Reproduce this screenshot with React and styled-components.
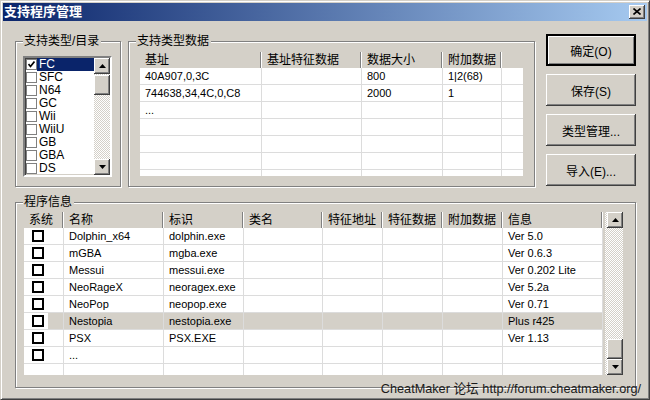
import React from 'react';
import styled, { createGlobalStyle } from 'styled-components';

const FACE = '#D4D0C8';
const GRID = '#DCDCDC';
const FONT = '"Liberation Sans", "Noto Sans CJK SC", sans-serif';

const GlobalStyle = createGlobalStyle`
  html, body { margin: 0; padding: 0; background: ${FACE}; }
  body { font-family: ${FONT}; font-size: 11px; color: #000; }
  * { box-sizing: border-box; }
`;

const Window = styled.div`
  position: relative;
  width: 650px;
  height: 400px;
  background: ${FACE};
  border: 1px solid;
  border-color: ${FACE} #404040 #404040 ${FACE};
  box-shadow: inset 1px 1px 0 #fff, inset -1px -1px 0 #808080;
  padding: 2px;
  display: flex;
  flex-direction: column;
`;

const TitleBar = styled.div`
  flex: none;
  height: 18px;
  display: flex;
  align-items: center;
  justify-content: space-between;
  padding: 0 2px 0 1px;
  background: linear-gradient(to right, #0a246a, #a6caf0);
`;

const TitleText = styled.span`
  color: #fff;
  font-weight: bold;
  font-size: 13px;
  line-height: 18px;
`;

const CloseButton = styled.div`
  width: 16px;
  height: 14px;
  background: ${FACE};
  box-shadow: inset -1px -1px #404040, inset 1px 1px #fff, inset -2px -2px #808080;
  display: flex;
  align-items: center;
  justify-content: center;
  padding-bottom: 1px;
`;

const Body = styled.div`
  flex: 1;
  padding: 13px 0 0 12px;
  display: flex;
  flex-direction: column;
`;

const TopRow = styled.div`
  display: flex;
  align-items: flex-start;
`;

const GroupBox = styled.div`
  position: relative;
  flex: none;
  width: ${p => p.$w}px;
  height: ${p => p.$h}px;
  margin: ${p => p.$m || '0'};
  padding: ${p => p.$pad};
  border: 1px solid #808080;
  box-shadow: inset 1px 1px 0 #fff, 1px 1px 0 #fff;
`;

const GroupLabel = styled.span`
  position: absolute;
  top: -8px;
  left: 7px;
  padding: 0 2px 0 1px;
  background: ${FACE};
  font-size: 12px;
  line-height: 15px;
`;

const ButtonColumn = styled.div`
  display: flex;
  flex-direction: column;
  gap: 8px;
  margin-left: 11px;
`;

const Button = styled.button`
  width: 90px;
  height: 32px;
  padding: 0;
  background: ${FACE};
  font-family: ${FONT};
  font-size: 12px;
  color: #000;
  border: ${p => (p.$default ? '2px solid #000' : 'none')};
  box-shadow: ${p =>
    p.$default
      ? 'inset 1px 1px #fff, inset -1px -1px #808080'
      : `inset -1px -1px #404040, inset 1px 1px #fff, inset -2px -2px #808080, inset 2px 2px ${FACE}`};
`;

/* ---------- listbox ---------- */

const ListBox = styled.div`
  width: 89px;
  height: 121px;
  display: flex;
  background: #fff;
  border: 2px solid;
  border-color: #808080 #fff #fff #808080;
  box-shadow: inset 1px 1px #404040, inset -1px -1px ${FACE};
  overflow: hidden;
`;

const ListItems = styled.div`
  flex: 1;
  overflow: hidden;
`;

const ListItem = styled.div`
  height: 13px;
  display: flex;
  align-items: center;
`;

const SmallCheck = styled.span`
  flex: none;
  width: 11px;
  height: 11px;
  margin-left: 1px;
  border: 1px solid #808080;
  background: #fff;
  display: flex;
  align-items: center;
  justify-content: center;
`;

const ItemText = styled.span`
  flex: 1;
  height: 13px;
  line-height: 13px;
  font-size: 12px;
  padding-left: 2px;
  background: ${p => (p.$sel ? '#0a246a' : 'transparent')};
  color: ${p => (p.$sel ? '#fff' : '#000')};
`;

/* ---------- scrollbar ---------- */

const Track = styled.div`
  flex: none;
  width: ${p => p.$w || 16}px;
  display: flex;
  flex-direction: column;
  align-items: flex-end;
  background: repeating-conic-gradient(#fff 0% 25%, ${FACE} 0% 50%) 0 0 / 2px 2px;
`;

const ScrollPart = styled.div`
  flex: none;
  width: 16px;
  height: ${p => p.$h || 16}px;
  margin-top: ${p => p.$mt || 0}px;
  background: ${FACE};
  box-shadow: inset -1px -1px #404040, inset 1px 1px #fff, inset -2px -2px #808080;
  display: flex;
  align-items: center;
  justify-content: center;
`;

const Spacer = styled.div`
  flex: 1;
`;

const Arrow = ({ down }) => (
  <svg width="7" height="4" viewBox="0 0 7 4">
    <polygon points={down ? '0,0 7,0 3.5,4' : '3.5,0 7,4 0,4'} fill="#000" />
  </svg>
);

/* ---------- grids ---------- */

const Table = styled.div`
  width: ${p => p.$w}px;
  height: ${p => p.$h}px;
  overflow: hidden;
  background: #fff;
`;

const Row = styled.div`
  display: grid;
  grid-template-columns: ${p => p.$cols};
  height: ${p => (p.$head ? 16 : 17)}px;
  background: ${p => (p.$head ? FACE : '#fff')};
`;

const HeadCell = styled.div`
  font-size: 12px;
  line-height: 16px;
  padding-left: 5px;
  white-space: nowrap;
  overflow: hidden;
  border-right: ${p => (p.$sep ? '1px solid #fff' : 'none')};
  box-shadow: ${p => (p.$sep ? 'inset -1px 0 #808080' : 'none')};
`;

const Cell = styled.div`
  line-height: 16px;
  padding-left: 5px;
  white-space: nowrap;
  overflow: hidden;
  border-bottom: 1px solid ${GRID};
  border-right: ${p => (p.$sep ? `1px solid ${GRID}` : 'none')};
  background: ${p => (p.$sel ? FACE : 'transparent')};
`;

const CheckCell = styled(Cell)`
  display: flex;
  align-items: center;
  padding-left: 8px;
  background: ${p => (p.$sel ? `linear-gradient(to right, #fff 24px, ${FACE} 24px)` : 'transparent')};
`;

const BoxCheck = styled.span`
  width: 12px;
  height: 12px;
  border: 2px solid #000;
  background: #fff;
`;

const ListArea = styled.div`
  width: 599px;
  height: 163px;
  display: flex;
  background: ${FACE};
`;

const Footer = styled.div`
  position: absolute;
  right: 8px;
  bottom: 2px;
  font-size: 12.7px;
  line-height: 15px;
  color: #1a1a1a;
  white-space: nowrap;
`;

const types = ['FC', 'SFC', 'N64', 'GC', 'Wii', 'WiiU', 'GB', 'GBA', 'DS'];

const dataCols = '122px 100px 81px 59px 21px';
const dataHead = ['基址', '基址特征数据', '数据大小', '附加数据', ''];
const dataRows = [
  ['40A907,0,3C', '', '800', '1|2(68)', ''],
  ['744638,34,4C,0,C8', '', '2000', '1', ''],
  ['...', '', '', '', ''],
  ['', '', '', '', ''],
  ['', '', '', '', ''],
  ['', '', '', '', ''],
  ['', '', '', '', ''],
];

const progCols = '40px 100px 80px 79px 60px 60px 60px 100px';
const progHead = ['系统', '名称', '标识', '类名', '特征地址', '特征数据', '附加数据', '信息'];
const programs = [
  { name: 'Dolphin_x64', id: 'dolphin.exe', info: 'Ver 5.0' },
  { name: 'mGBA', id: 'mgba.exe', info: 'Ver 0.6.3' },
  { name: 'Messui', id: 'messui.exe', info: 'Ver 0.202 Lite' },
  { name: 'NeoRageX', id: 'neoragex.exe', info: 'Ver 5.2a' },
  { name: 'NeoPop', id: 'neopop.exe', info: 'Ver 0.71' },
  { name: 'Nestopia', id: 'nestopia.exe', info: 'Plus r425', sel: true },
  { name: 'PSX', id: 'PSX.EXE', info: 'Ver 1.13' },
  { name: '...', id: '', info: '' },
  { name: '', id: '', info: '', empty: true },
];

export default function App() {
  return (
    <>
      <GlobalStyle />
      <Window>
        <TitleBar>
          <TitleText>支持程序管理</TitleText>
          <CloseButton>
            <svg width="8" height="7" viewBox="0 0 8 7">
              <path d="M0.5 0.5 L7.5 6.5 M7.5 0.5 L0.5 6.5" stroke="#000" strokeWidth="1.6" />
            </svg>
          </CloseButton>
        </TitleBar>

        <Body>
          <TopRow>
            <GroupBox $w={106} $h={146} $m="7px 0 0 0" $pad="14px 0 0 7px">
              <GroupLabel>支持类型/目录</GroupLabel>
              <ListBox>
                <ListItems>
                  {types.map((t, i) => (
                    <ListItem key={t}>
                      <SmallCheck>
                        {i === 0 && (
                          <svg width="7" height="7" viewBox="0 0 7 7">
                            <path d="M0.5 3 L2.5 5.5 L6.5 0.5" stroke="#000" strokeWidth="1.7" fill="none" />
                          </svg>
                        )}
                      </SmallCheck>
                      <ItemText $sel={i === 0}>{t}</ItemText>
                    </ListItem>
                  ))}
                </ListItems>
                <Track>
                  <ScrollPart><Arrow /></ScrollPart>
                  <ScrollPart $h={20} $mt={1} />
                  <Spacer />
                  <ScrollPart><Arrow down /></ScrollPart>
                </Track>
              </ListBox>
            </GroupBox>

            <GroupBox $w={407} $h={146} $m="7px 0 0 7px" $pad="10px 0 0 11px">
              <GroupLabel>支持类型数据</GroupLabel>
              <Table $w={383} $h={124}>
                <Row $head $cols={dataCols}>
                  {dataHead.map((h, i) => (
                    <HeadCell key={i} $sep={i < 4}>{h}</HeadCell>
                  ))}
                </Row>
                {dataRows.map((r, ri) => (
                  <Row key={ri} $cols={dataCols}>
                    {r.map((c, ci) => (
                      <Cell key={ci} $sep={ci < 4}>{c}</Cell>
                    ))}
                  </Row>
                ))}
              </Table>
            </GroupBox>

            <ButtonColumn>
              <Button $default>确定(O)</Button>
              <Button>保存(S)</Button>
              <Button>类型管理...</Button>
              <Button>导入(E)...</Button>
            </ButtonColumn>
          </TopRow>

          <GroupBox $w={621} $h={186} $m="15px 0 0 0" $pad="9px 0 0 8px">
            <GroupLabel>程序信息</GroupLabel>
            <ListArea>
              <Table $w={579} $h={163}>
                <Row $head $cols={progCols}>
                  {progHead.map(h => (
                    <HeadCell key={h} $sep>{h}</HeadCell>
                  ))}
                </Row>
                {programs.map((p, ri) => (
                  <Row key={ri} $cols={progCols}>
                    <CheckCell $sep $sel={p.sel}>{!p.empty && <BoxCheck />}</CheckCell>
                    <Cell $sep $sel={p.sel}>{p.name}</Cell>
                    <Cell $sep $sel={p.sel}>{p.id}</Cell>
                    <Cell $sep $sel={p.sel} />
                    <Cell $sep $sel={p.sel} />
                    <Cell $sep $sel={p.sel} />
                    <Cell $sep $sel={p.sel} />
                    <Cell $sep $sel={p.sel}>{p.info}</Cell>
                  </Row>
                ))}
              </Table>
              <Spacer />
              <Track $w={18}>
                <ScrollPart><Arrow /></ScrollPart>
                <Spacer />
                <ScrollPart $h={20} />
                <ScrollPart><Arrow down /></ScrollPart>
              </Track>
            </ListArea>
          </GroupBox>
        </Body>

        <Footer>CheatMaker 论坛 http://forum.cheatmaker.org/</Footer>
      </Window>
    </>
  );
}
